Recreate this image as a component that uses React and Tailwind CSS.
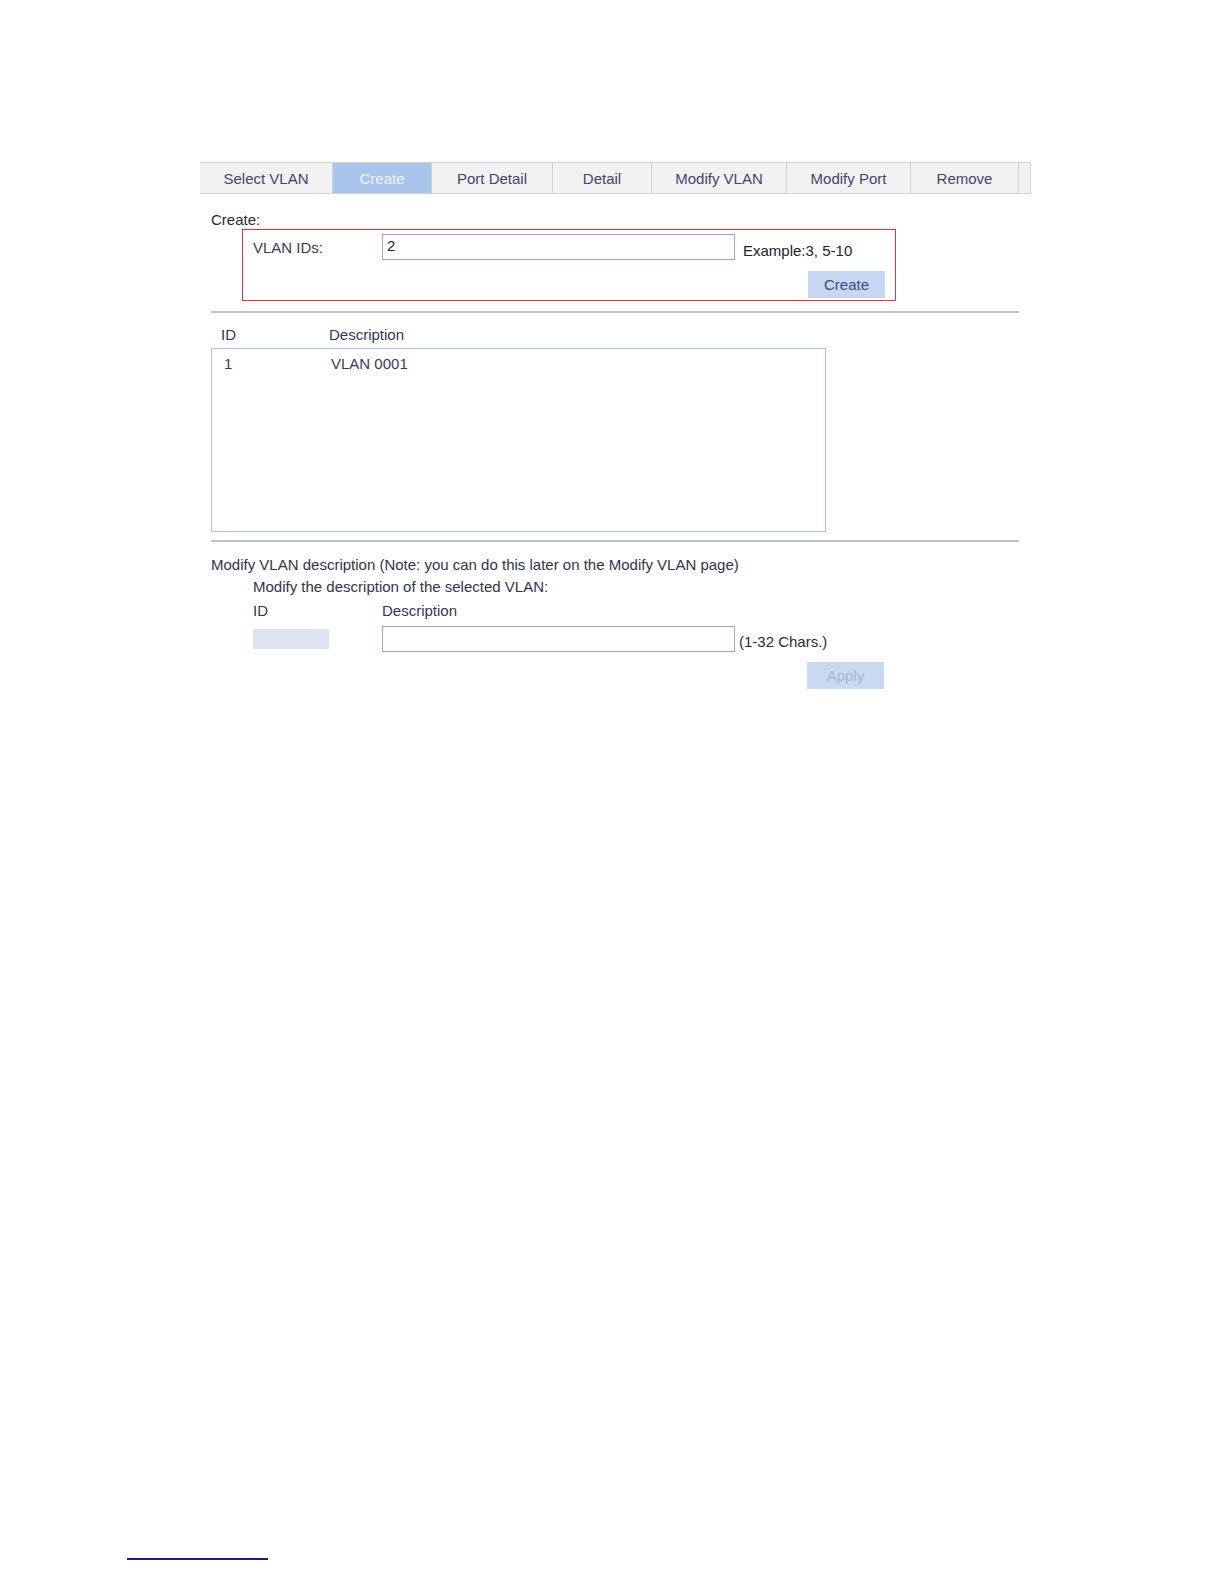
import React from "react";

const tabs = [
  { label: "Select VLAN", w: "w-[133px]" },
  { label: "Create", w: "w-[99px]", active: true },
  { label: "Port Detail", w: "w-[121px]" },
  { label: "Detail", w: "w-[99px]" },
  { label: "Modify VLAN", w: "w-[135px]" },
  { label: "Modify Port", w: "w-[124px]" },
  { label: "Remove", w: "w-[108px]" },
];

export default function App() {
  return (
    <div
      className="relative w-[1224px] h-[1584px] bg-white text-[15px] text-[#2e2e48]"
      style={{ fontFamily: '"Liberation Sans", Arial, sans-serif' }}
    >
      <div className="pt-[162px] pl-[200px]">
        {/* tabs */}
        <div className="flex w-[831px] h-[32px] border-t border-b border-[#d2d2d2] bg-[#f2f2f2]">
          {tabs.map((t) => (
            <div
              key={t.label}
              className={
                "flex items-center justify-center border-r border-[#d2d2d2] pt-[3px] " +
                t.w +
                (t.active ? " bg-[#a9c5ec] text-[#eef3fb]" : " text-[#44446e]")
              }
            >
              {t.label}
            </div>
          ))}
          <div className="w-[12px] border-r border-[#d2d2d2]" />
        </div>

        <div className="pl-[11px] w-[819px]">
          <div className="mt-[16px] h-[19px] leading-[19px] text-[#2a2a36]">Create:</div>

          {/* create box */}
          <div className="ml-[31px] w-[654px] h-[72px] border border-[#e0353f] pl-[10px] pt-[4px]">
            <div className="flex items-start">
              <div className="w-[129px] pt-[3px] text-[#3a3a58]">VLAN IDs:</div>
              <div className="w-[353px] h-[26px] border border-[#9aaccb] pl-[4px] leading-[22px] text-[#222]">2</div>
              <div className="ml-[8px] pt-[6px] text-[#22222e]">Example:3, 5-10</div>
            </div>
            <div className="flex justify-end pr-[10px] mt-[8px]">
              <button className="w-[77px] h-[27px] bg-[#c7d7f2] text-[#3b4a86] pt-[3px]">Create</button>
            </div>
          </div>

          <div className="mt-[10px] h-[2px] w-[808px] bg-[#c4c4c4]" />

          {/* list header */}
          <div className="flex mt-[12px] h-[20px] leading-[20px] pl-[10px] text-[#35355a]">
            <div className="w-[108px]">ID</div>
            <div>Description</div>
          </div>
          <div className="mt-[3px] w-[615px] h-[184px] border border-[#a9c2e6] pt-[4px] pl-[12px]">
            <div className="flex text-[#3a3a5e]">
              <div className="w-[107px]">1</div>
              <div>VLAN 0001</div>
            </div>
          </div>

          <div className="mt-[8px] h-[2px] w-[808px] bg-[#c4c4c4]" />

          {/* modify */}
          <div className="mt-[13px] leading-[20px] text-[#33334e]">
            Modify VLAN description (Note: you can do this later on the Modify VLAN page)
          </div>
          <div className="pl-[42px]">
            <div className="mt-[2px] leading-[20px] text-[#33334e]">
              Modify the description of the selected VLAN:
            </div>
            <div className="flex mt-[4px] leading-[20px] text-[#35355a]">
              <div className="w-[129px]">ID</div>
              <div>Description</div>
            </div>
            <div className="flex items-start mt-[5px]">
              <div className="w-[76px] h-[20px] mt-[3px] bg-[#dde5f2]" />
              <div className="ml-[53px] w-[353px] h-[26px] border border-[#9aaccb]" />
              <div className="ml-[4px] pt-[5px] text-[#2a2a40]">(1-32 Chars.)</div>
            </div>
            <div className="flex mt-[8px]">
              <button className="ml-[554px] w-[77px] h-[27px] bg-[#cad9f1] text-[#a7b6cf] pt-[3px]">Apply</button>
            </div>
          </div>
        </div>
      </div>

      {/* footnote rule */}
      <div className="absolute left-[127px] top-[1558px] w-[141px] h-[2px] bg-[#1a1a8c]" />
    </div>
  );
}
